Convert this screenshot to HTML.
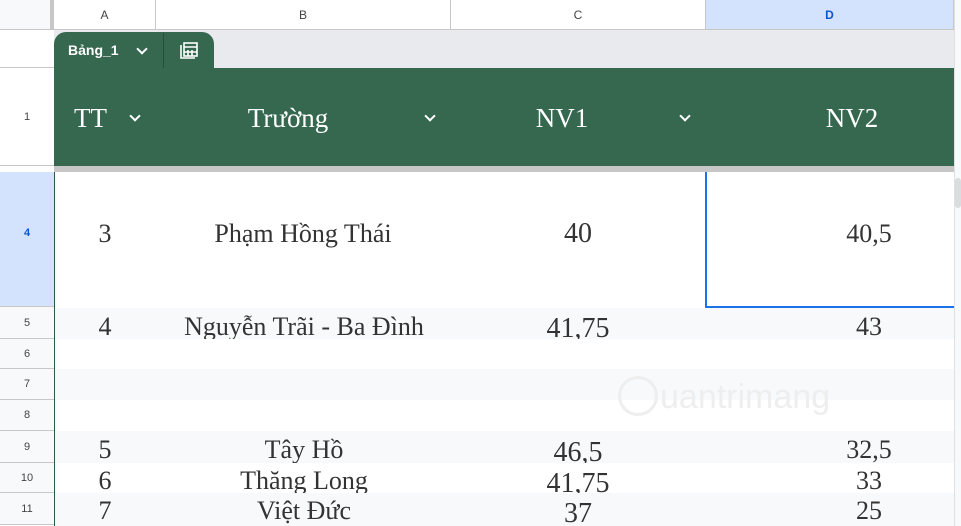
<!DOCTYPE html>
<html><head><meta charset="utf-8"><style>
*{margin:0;padding:0;box-sizing:border-box}
body{width:961px;height:526px;overflow:hidden;background:#fff;position:relative;font-family:"Liberation Sans",sans-serif}
.a{position:absolute}
.ch{top:0;height:30px;border-right:1px solid #c7c7c7;border-bottom:1px solid #c7c7c7;font-size:12px;color:#444;text-align:center;line-height:30px;background:#fff}
.rh{left:0;width:54px;border-bottom:1px solid #c7c7c7;font-size:11px;color:#444;text-align:center;background:#f8f9fa}
.row{left:55px;width:899px;overflow:hidden;font-family:"Liberation Serif",serif;font-size:26px;color:#333}
.row span{position:absolute;transform:translateX(-50%);white-space:nowrap}
.hd span{position:absolute;color:#fff;font-family:"Liberation Serif",serif;font-size:27px;transform:translateX(-50%)}
.chev{position:absolute;width:8px;height:8px;border-right:2px solid #fff;border-bottom:2px solid #fff;transform:rotate(45deg)}
</style></head><body>
<div class="a" style="left:0;top:0;width:54px;height:30px;background:#f8f9fa;border-right:4px solid #c7c7c7;border-bottom:1px solid #c7c7c7"></div>
<div class="a ch" style="left:54px;width:102px">A</div>
<div class="a ch" style="left:156px;width:295px">B</div>
<div class="a ch" style="left:451px;width:255px">C</div>
<div class="a ch" style="left:706px;width:248px;background:#d3e3fd;color:#0b57d0;font-weight:bold">D</div>
<div class="a" style="left:954px;top:0;width:7px;height:526px;background:#f8f9fa;border-left:1px solid #e0e0e0"></div>
<div class="a" style="left:955px;top:178px;width:6px;height:30px;background:#dadce0;border-radius:3px"></div>

<div class="a rh" style="top:30px;height:38px;background:#fff"></div>
<div class="a" style="left:54px;top:30px;width:900px;height:38px;background:#e8eaed"></div>
<div class="a" style="left:54px;top:32px;width:160px;height:36px;background:#35684f;border-radius:12px 12px 0 0"></div>
<div class="a" style="left:163px;top:33px;width:1px;height:35px;background:#24503b"></div>
<div class="a" style="left:68px;top:42px;color:#fff;font-weight:bold;font-size:14px">Bảng_1</div>
<div class="chev" style="left:138px;top:45px;border-color:#fff"></div>
<svg class="a" style="left:179px;top:41px" width="20" height="20" viewBox="0 0 20 20" fill="none" stroke="#fff" stroke-width="1.6"><path d="M2 4v13h14"/><rect x="5" y="2" width="13" height="13"/><path d="M5 6h13M9 9v6M13 9v6M5 11h13"/></svg>

<div class="a rh" style="top:68px;height:98px;line-height:98px;background:#fff">1</div>
<div class="a hd" style="left:54px;top:68px;width:900px;height:98px;background:#35684f">
<span style="left:20px;top:35px;transform:none">TT</span>
<div class="chev" style="left:77px;top:44px"></div>
<span style="left:234px;top:35px">Trường</span>
<div class="chev" style="left:372px;top:44px"></div>
<span style="left:508px;top:35px">NV1</span>
<div class="chev" style="left:627px;top:44px"></div>
<span style="left:798px;top:35px">NV2</span>
</div>
<div class="a" style="left:54px;top:166px;width:900px;height:6px;background:#c7c7c7"></div>
<div class="a" style="left:0;top:166px;width:54px;height:6px;background:#fff"></div>

<div class="a rh" style="top:172px;height:135px;line-height:122px;background:#d3e3fd;color:#0b57d0;font-weight:bold">4</div>
<div class="a" style="left:54px;top:172px;width:1px;height:354px;background:#2d5a43"></div>
<div class="a row" style="top:172px;height:135px;background:#fff">
<span style="left:50px;top:47px">3</span><span style="left:248px;top:47px">Phạm Hồng Thái</span><span style="left:523px;top:46px;font-size:28px">40</span><span style="left:814px;top:47px">40,5</span>
</div>
<div class="a" style="left:705px;top:172px;width:249px;height:136px;border-left:2px solid #1a73e8;border-bottom:2px solid #1a73e8"></div>

<div class="a rh" style="top:307px;height:32px;line-height:32px">5</div>
<div class="a row" style="top:308px;height:31px;background:#f8f9fa"><span style="left:50px;top:4px">4</span><span style="left:249px;top:4px">Nguyễn Trãi - Ba Đình</span><span style="left:523px;top:5px;font-size:28px">41,75</span><span style="left:814px;top:4px">43</span></div>
<div class="a rh" style="top:339px;height:30px;line-height:30px">6</div>
<div class="a row" style="top:339px;height:30px;background:#fff"></div>
<div class="a rh" style="top:369px;height:31px;line-height:31px">7</div>
<div class="a row" style="top:369px;height:31px;background:#f8f9fa"></div>
<div class="a rh" style="top:400px;height:31px;line-height:31px">8</div>
<div class="a row" style="top:400px;height:31px;background:#fff"></div>
<div class="a rh" style="top:431px;height:32px;line-height:32px">9</div>
<div class="a row" style="top:431px;height:32px;background:#f8f9fa"><span style="left:50px;top:4px">5</span><span style="left:249px;top:4px">Tây Hồ</span><span style="left:523px;top:6px;font-size:28px">46,5</span><span style="left:814px;top:4px">32,5</span></div>
<div class="a rh" style="top:463px;height:30px;line-height:30px">10</div>
<div class="a row" style="top:463px;height:30px;background:#fff"><span style="left:50px;top:3px">6</span><span style="left:249px;top:3px">Thăng Long</span><span style="left:523px;top:5px;font-size:28px">41,75</span><span style="left:814px;top:3px">33</span></div>
<div class="a rh" style="top:493px;height:32px;line-height:32px">11</div>
<div class="a row" style="top:493px;height:33px;background:#f8f9fa"><span style="left:50px;top:3px">7</span><span style="left:249px;top:3px">Việt Đức</span><span style="left:523px;top:5px;font-size:28px">37</span><span style="left:814px;top:3px">25</span></div>

<div class="a" style="left:618px;top:376px;width:40px;height:40px;border:3px solid #eee;border-radius:50%"></div>
<div class="a" style="left:660px;top:378px;font-size:34px;color:#eee;font-family:'Liberation Sans',sans-serif">uantrimang</div>
</body></html>
